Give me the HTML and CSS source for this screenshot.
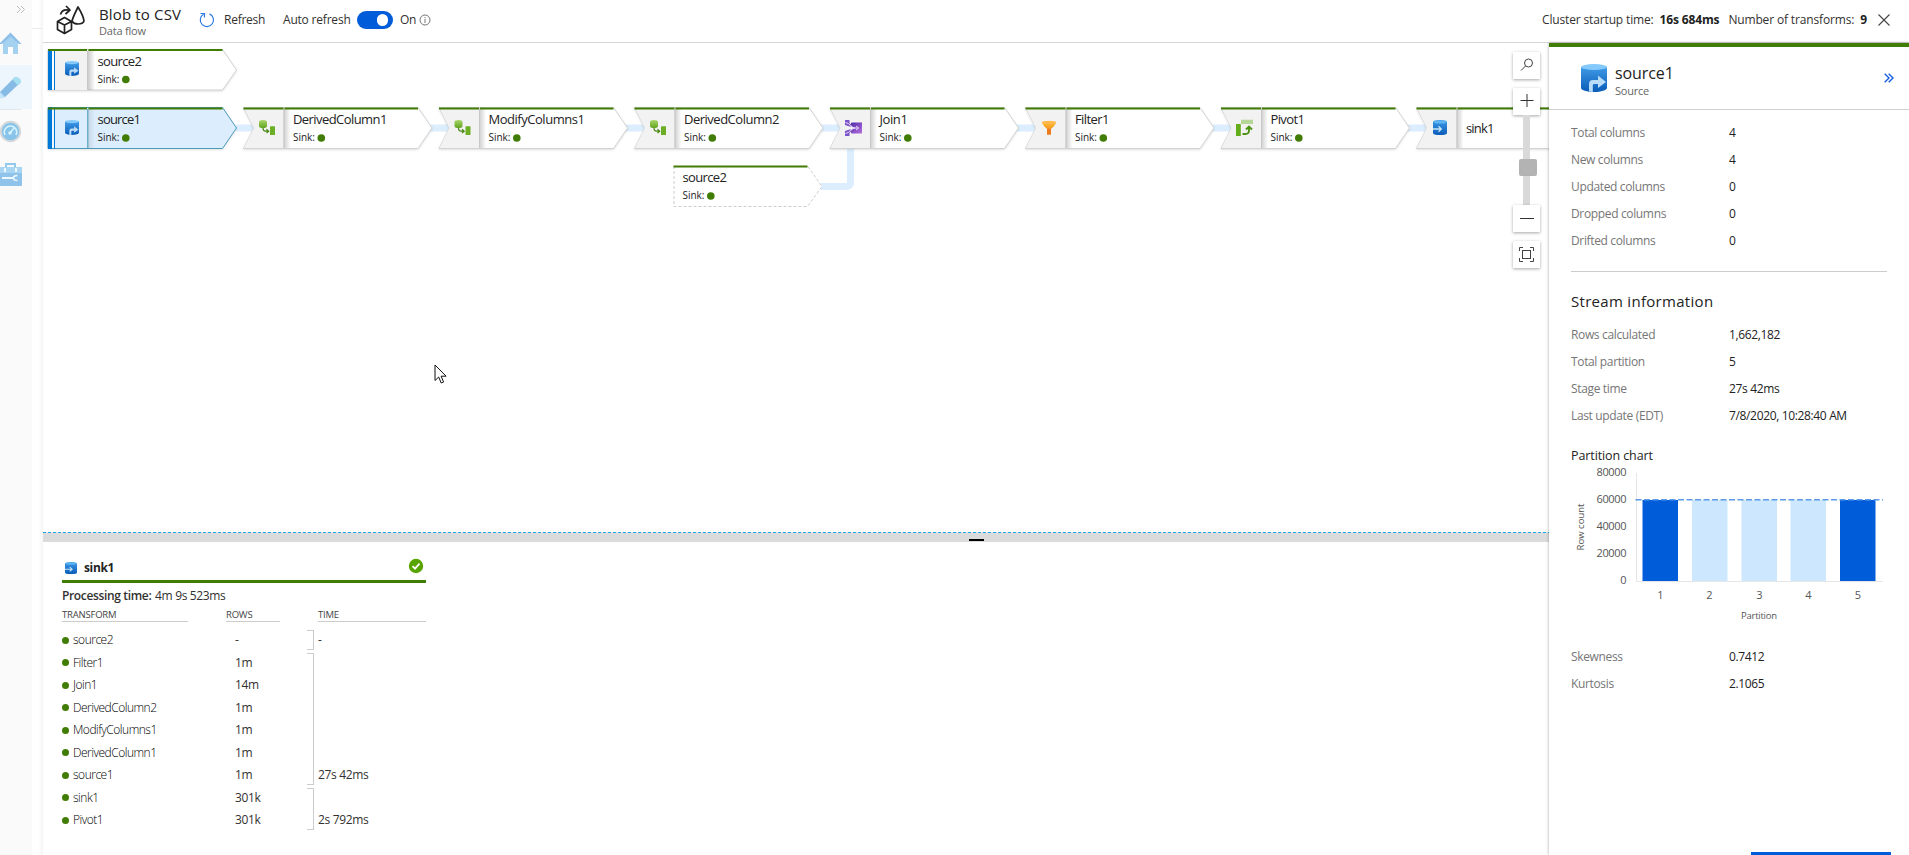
FILE: index.html
```
<!DOCTYPE html>
<html lang="en">
<head>
    <meta charset="UTF-8">
    <title>Blob to CSV | Data flow</title>
    <meta name="viewport" content="width=device-width, initial-scale=1">
    <link rel="stylesheet" href="styles.css">
</head>
<body>
    <!-- shared icons -->
    <svg class="defs" width="0" height="0">
        <defs>
            <linearGradient id="gBlue" x1="0" y1="0" x2="0" y2="1">
                <stop offset="0" stop-color="#3f9ae6"/><stop offset="1" stop-color="#0a5cb8"/>
            </linearGradient>
            <linearGradient id="gGreen" x1="0" y1="0" x2="0" y2="1">
                <stop offset="0" stop-color="#a9d66a"/><stop offset="1" stop-color="#62a420"/>
            </linearGradient>
            <linearGradient id="gPurple" x1="0" y1="0" x2="1" y2="1">
                <stop offset="0" stop-color="#4a2aa8"/><stop offset="1" stop-color="#b96fe0"/>
            </linearGradient>
            <linearGradient id="gOrange" x1="0" y1="0" x2="0" y2="1">
                <stop offset="0" stop-color="#fbb62f"/><stop offset="1" stop-color="#f07f1e"/>
            </linearGradient>
            <linearGradient id="gShade" x1="0" y1="0" x2="1" y2="0">
                <stop offset="0" stop-color="#000" stop-opacity=".2"/><stop offset="1" stop-color="#000" stop-opacity="0"/>
            </linearGradient>
            <symbol id="i-source" viewBox="0 0 26 28">
                <path d="M0 3v21c0 2 6 4 13 4s13-2 13-4V3z" fill="url(#gBlue)"/>
                <ellipse cx="13" cy="3" rx="13" ry="3" fill="#83c9fb"/>
                <path d="M8 27.5V20q0-4 4-4h5v-4.500l8 6.500-8 6v-4h-4q-1.200 0-1.200 1.200V28z" fill="#b9dcf8"/>
            </symbol>
            <symbol id="i-sink" viewBox="0 0 14 15">
                <path d="M0 2q0-2 7-2t7 2v11q0 2-7 2t-7-2z" fill="url(#gBlue)"/>
                <path d="M.5 2Q1 .5 7 .5t6.500 1.500Q13 3.500 7 3.500T.5 2z" fill="#5db4f3"/>
                <path d="M0 9h8M5.500 6.300 8.300 9l-2.800 2.700" fill="none" stroke="#c6e3fa" stroke-width="1.300"/>
            </symbol>
            <symbol id="i-derived" viewBox="0 0 17 15">
                <path d="M.5 2Q.5 0 4.500 0t4 2v4q0 2-4 2t-4-2z" fill="url(#gGreen)"/>
                <path d="M4.500 8q0 3.200 2.500 3.200h2.500M8 9.300l2.200 1.900L8 13" fill="none" stroke="#4c8a17" stroke-width="1.200"/>
                <rect x="11.500" y="6.300" width="5" height="8.700" rx=".5" fill="#6cae25"/>
            </symbol>
            <symbol id="i-join" viewBox="0 0 18 17">
                <path d="M.5.500h4.500v3l3 3.500H5L.5 5.500zM.5 16.500h4.500v-3l3-3.500H5L.5 11.500z" fill="#7c53c8"/>
                <path d="M7 3h10.500v11H7l-1-2 3-3.500L6 5z" fill="url(#gPurple)"/>
                <path d="M1 3q3 .5 5 3t5 2.500h3M1 14q3-.5 5-3t5-2.500M11.500 6.500l2.500 2-2.500 2" fill="none" stroke="#e8dcfa" stroke-width="1"/>
            </symbol>
            <symbol id="i-filter" viewBox="0 0 15 15">
                <path d="M.5 2.500Q3 7 5.500 8.300V14h4V8.300Q12 7 14.500 2.500z" fill="url(#gOrange)"/>
                <ellipse cx="7.500" cy="2" rx="7.200" ry="1.700" fill="#fdb94b"/>
                <path d="M5.500 8.300h4V14h-4z" fill="#ee7a1e"/>
            </symbol>
            <symbol id="i-pivot" viewBox="0 0 17 17">
                <rect x="5" y="0" width="12" height="4.500" fill="#b5d698"/>
                <rect x="0" y="4.500" width="4.800" height="12" fill="#63ad1a"/>
                <path d="M6.500 14.500h3q3.500 0 3.500-3.500V8M10 10l3-3 3 3" fill="none" stroke="#4f9312" stroke-width="1.900"/>
            </symbol>
            <!-- transformation step with a notched left edge -->
            <g id="step">
                <path class="step-box" d="M0 .500 10.500 21 0 41.500H174.500L188.500 21 174.500.500z"/>
                <path class="step-icon-bg" d="M.5 1 10.500 21 .5 41H40V1z"/>
                <rect x="40" y="1" width="7" height="40" fill="url(#gShade)"/>
                <path class="step-divider" d="M40.500 2v39"/>
                <path class="step-top" d="M0 1.500H40M41 1.500H174.500"/>
            </g>
        </defs>
    </svg>

    <nav class="sidebar">
        <svg width="43" height="200" viewBox="0 0 43 200">
            <path d="M17 6l3.500 3.500L17 13M21 6l3.500 3.500L21 13" fill="none" stroke="#bbb" stroke-width="1"/>
            <path d="M32 28.500h11" stroke="#ececec"/>
            <g>
                <path d="M3 41v13h15V41l-7.500-8z" fill="#a5d2f0"/>
                <path d="M10.500 32.500-1 44h3l8.500-7.500L19 44h2.500z" fill="#8dbfe8"/>
                <rect x="8" y="47" width="5" height="7" fill="#fff"/>
            </g>
            <rect class="nav-active" x="0" y="65" width="32" height="44"/>
            <path d="M0 92 15 77l5.500 5.500L5 97l-8 2z" fill="#86bbe6"/>
            <path d="m12.500 79.500 2.500-2.500q2-1 4.500 1.500t1 4.500l-2.500 2.500z" fill="#a6dff2"/>
            <path d="m0 92 5 5-7 2z" fill="#c4e4f7"/>
            <path d="M0 109.500h21" stroke="#e2e6ea"/>
            <circle cx="10.500" cy="131.500" r="9.700" fill="#88c4ea" stroke="#d4d8da" stroke-width="2"/>
            <path d="M5 135a6.200 6.200 0 1 1 11 0M10 133l4-5" fill="none" stroke="#d5f2fb" stroke-width="1.600"/>
            <circle cx="10" cy="133" r="1.800" fill="#d5f2fb"/>
            <path d="M6 167v-3h9v3" fill="none" stroke="#92c9ec" stroke-width="2"/>
            <rect x="-2" y="167" width="24" height="19" rx="1" fill="#90c3ea"/>
            <rect x="-2" y="167" width="24" height="6" fill="#a8d6f2"/>
            <path d="M2 178h12M5 168v4M16 168v4" stroke="#ecf8fd" stroke-width="2"/>
            <path d="M17.500 175.500q-4 0-4 2.500t4 2.500" fill="none" stroke="#ecf8fd" stroke-width="1.500"/>
        </svg>
    </nav>

    <div class="monitor">
        <header class="topbar">
            <svg class="flow-icon" width="30" height="30" viewBox="0 0 30 30" fill="none" stroke="#222" stroke-width="1.700" stroke-linejoin="round">
                <path d="M1.500 16.500 8.500 12.500l7 4v8l-7 4-7-4zM1.500 16.500l7 3.500 7-3.500M8.500 20v8.500"/>
                <path d="M16 16Q17 12 22 2q5.500 9 6 14-1 3-6 3-4.500 0-6-3z"/>
                <path d="M4.500 9.500Q6 4 12.500 5M10 1l4 4-4.500 4"/>
            </svg>
            <div class="title">
                <h1>Blob to CSV</h1>
                <span>Data flow</span>
            </div>
            <button class="refresh" type="button">
                <svg width="16" height="16" viewBox="0 0 16 16" fill="none" stroke="#2d7be0" stroke-width="1.200">
                    <path d="M10.500 1.900A6.600 6.600 0 1 1 4.500 2.300M1.500 1.500h4v4"/>
                </svg>
                <span>Refresh</span>
            </button>
            <label class="auto">Auto refresh</label>
            <span class="toggle"></span>
            <span class="on">On</span>
            <svg class="info" width="12" height="12" viewBox="0 0 12 12" fill="none" stroke="#777">
                <circle cx="6" cy="6" r="5"/><path d="M6 5v4M6 3v1.200"/>
            </svg>
            <div class="stats">
                <span class="cluster">Cluster startup time:</span>
                <b class="cluster-time">16s 684ms</b>
                <span class="transforms">Number of transforms:</span>
                <b>9</b>
                <svg width="12" height="12" viewBox="0 0 12 12" stroke="#444" stroke-width="1.100"><path d="M.5.500l11 11M11.500.500l-11 11"/></svg>
            </div>
        </header>

        <div class="content">
            <main>
                <section class="canvas">
                    <svg class="graph" width="1506" height="489" viewBox="43 43 1506 489">
                        <!-- links -->
                        <path class="link" d="M236 128H1430"/>
                        <path class="link" d="M821 186.500H846q4.500 0 4.500-4.500V146"/>

                        <g transform="translate(48 49)">
                            <path class="step-box" d="M0 .500H174.500L188.500 21 174.500 41H0z"/>
                            <rect x="7" y="2" width="33" height="39" fill="#f2f2f2"/>
                            <rect x="40" y="1" width="7" height="40" fill="url(#gShade)"/>
                            <path class="step-divider" d="M39.500 2v39"/>
                            <path d="M1.800 0v41M6.500 1v40" stroke="#0078d7"/>
                            <rect x="0" y="0" width="4" height="41" fill="#0078d7"/>
                            <path class="step-top" d="M0 1H39M40.500 1H174.500"/>
                            <use href="#i-source" x="17" y="12" width="14" height="15"/>
                            <text class="name" x="49.500" y="17" textLength="44">source2</text>
                            <text class="sink" x="49.500" y="34" textLength="21.500">Sink:</text>
                            <circle class="ok" cx="77.800" cy="30.500" r="3.800"/>
                        </g>

                        <g transform="translate(48 107)">
                            <path class="step-box selected" d="M0 .500H174.500L188.500 21 174.500 41.500H0z"/>
                            <rect x="40" y="1" width="7" height="40" fill="url(#gShade)" opacity=".5"/>
                            <path d="M39.800 2v39" stroke="#3f95b4"/>
                            <path d="M5 2v39" stroke="#fff"/>
                            <path d="M6.500 1v41" stroke="#0078d7"/>
                            <rect x="0" y="0" width="4" height="42" fill="#0078d7"/>
                            <path class="step-top" d="M0 1.500H39M40.500 1.500H174.500"/>
                            <use href="#i-source" x="17" y="13" width="14" height="15"/>
                            <text class="name" x="49.500" y="17" textLength="43">source1</text>
                            <text class="sink" x="49.500" y="34" textLength="21.500">Sink:</text>
                            <circle class="ok" cx="77.800" cy="31" r="3.800"/>
                        </g>

                        <g transform="translate(243.500 107)">
                            <use href="#step"/>
                            <use href="#i-derived" x="15" y="13" width="17" height="15"/>
                            <text class="name" x="49.500" y="17" textLength="94">DerivedColumn1</text>
                            <text class="sink" x="49.500" y="34" textLength="21.500">Sink:</text>
                            <circle class="ok" cx="77.800" cy="31" r="3.800"/>
                        </g>

                        <g transform="translate(439 107)">
                            <use href="#step"/>
                            <use href="#i-derived" x="15" y="13" width="17" height="15"/>
                            <text class="name" x="49.500" y="17" textLength="96">ModifyColumns1</text>
                            <text class="sink" x="49.500" y="34" textLength="21.500">Sink:</text>
                            <circle class="ok" cx="77.800" cy="31" r="3.800"/>
                        </g>

                        <g transform="translate(634.500 107)">
                            <use href="#step"/>
                            <use href="#i-derived" x="15" y="13" width="17" height="15"/>
                            <text class="name" x="49.500" y="17" textLength="95">DerivedColumn2</text>
                            <text class="sink" x="49.500" y="34" textLength="21.500">Sink:</text>
                            <circle class="ok" cx="77.800" cy="31" r="3.800"/>
                        </g>

                        <g transform="translate(830 107)">
                            <use href="#step"/>
                            <use href="#i-join" x="14.500" y="12.500" width="18" height="17"/>
                            <text class="name" x="49.500" y="17" textLength="28">Join1</text>
                            <text class="sink" x="49.500" y="34" textLength="21.500">Sink:</text>
                            <circle class="ok" cx="77.800" cy="31" r="3.800"/>
                        </g>

                        <g transform="translate(1025.500 107)">
                            <use href="#step"/>
                            <use href="#i-filter" x="16" y="13.500" width="15" height="15"/>
                            <text class="name" x="49.500" y="17" textLength="34">Filter1</text>
                            <text class="sink" x="49.500" y="34" textLength="21.500">Sink:</text>
                            <circle class="ok" cx="77.800" cy="31" r="3.800"/>
                        </g>

                        <g transform="translate(1221 107)">
                            <use href="#step"/>
                            <use href="#i-pivot" x="15" y="12.500" width="17" height="17"/>
                            <text class="name" x="49.500" y="17" textLength="34">Pivot1</text>
                            <text class="sink" x="49.500" y="34" textLength="21.500">Sink:</text>
                            <circle class="ok" cx="77.800" cy="31" r="3.800"/>
                        </g>

                        <g transform="translate(1416.500 107)">
                            <use href="#step"/>
                            <use href="#i-sink" x="16.500" y="13" width="14" height="15"/>
                            <text class="name" x="49.500" y="26" textLength="28">sink1</text>
                        </g>

                        <!-- reference to source2 for the join -->
                        <g transform="translate(673.500 165)">
                            <path class="step-ref" d="M.5 1V41.500H134L148.500 21.500 134 1"/>
                            <path class="step-top" d="M0 1.500H134"/>
                            <text class="name" x="9" y="17" textLength="44">source2</text>
                            <text class="sink" x="9" y="34" textLength="21.500">Sink:</text>
                            <circle class="ok" cx="37.300" cy="31" r="3.800"/>
                        </g>
                    </svg>

                    <div class="zoom">
                        <button type="button"><svg width="14" height="14" viewBox="0 0 14 14" fill="none" stroke="#444"><circle cx="8.500" cy="5" r="4"/><path d="M5.500 8 1 12.500"/></svg></button>
                        <button type="button" class="zoom-in"><svg width="14" height="14" viewBox="0 0 14 14" stroke="#333"><path d="M.5 6.500h13M7 0v13"/></svg></button>
                        <div class="track"><span></span></div>
                        <button type="button"><svg width="14" height="14" viewBox="0 0 14 14" stroke="#333"><path d="M0 7.500h14"/></svg></button>
                        <button type="button" class="fit"><svg width="15" height="15" viewBox="0 0 15 15" fill="none" stroke="#444"><path d="M.5 4V.500H4M11 .500h3.500V4M14.500 11v3.500H11M4 14.500H.5V11"/><rect x="3.500" y="3.500" width="8" height="8"/></svg></button>
                    </div>

                    <svg class="cursor" width="14" height="21" viewBox="0 0 14 21">
                        <path d="M1 1v15.500l3.700-3.500 2.500 6 2.400-1-2.500-5.800h5z" fill="#fff" stroke="#111"/>
                    </svg>
                </section>

                <div class="splitter"><span></span></div>

                <section class="details">
                    <div class="sink-head">
                        <svg width="12" height="12" viewBox="0 0 14 15" preserveAspectRatio="none"><use href="#i-sink" width="14" height="15"/></svg>
                        <b>sink1</b>
                        <svg class="check" width="16" height="16" viewBox="0 0 16 16"><circle cx="8" cy="8" r="7.200" fill="#57a300"/><path d="m4.500 8.200 2.500 2.500 4.500-5" fill="none" stroke="#fff" stroke-width="1.800"/></svg>
                    </div>
                    <p class="processing"><b>Processing time:</b> <span>4m 9s 523ms</span></p>
                    <div class="heads">
                        <span>TRANSFORM</span><span>ROWS</span><span>TIME</span>
                    </div>
                    <div class="stages">
                        <ul class="names">
                            <li>source2</li>
                            <li>Filter1</li>
                            <li>Join1</li>
                            <li>DerivedColumn2</li>
                            <li>ModifyColumns1</li>
                            <li>DerivedColumn1</li>
                            <li>source1</li>
                            <li>sink1</li>
                            <li>Pivot1</li>
                        </ul>
                        <ul class="rows">
                            <li>-</li>
                            <li>1m</li>
                            <li>14m</li>
                            <li>1m</li>
                            <li>1m</li>
                            <li>1m</li>
                            <li>1m</li>
                            <li>301k</li>
                            <li>301k</li>
                        </ul>
                        <div class="times">
                            <div class="span-1"><span>-</span></div>
                            <div class="span-6"><span>27s 42ms</span></div>
                            <div class="span-2"><span>2s 792ms</span></div>
                        </div>
                    </div>
                </section>
            </main>

            <aside class="panel">
                <div class="panel-head">
                    <svg width="26" height="28"><use href="#i-source" width="26" height="28"/></svg>
                    <div>
                        <h2>source1</h2>
                        <span>Source</span>
                    </div>
                    <svg class="collapse" width="10" height="10" viewBox="0 0 10 10" fill="none" stroke="#1560e0" stroke-width="1.400"><path d="M.7.700 5 5 .7 9.300M4.700.700 9 5 4.700 9.300"/></svg>
                </div>
                <div class="panel-body">
                    <dl class="columns">
                        <dt>Total columns</dt><dd>4</dd>
                        <dt>New columns</dt><dd>4</dd>
                        <dt>Updated columns</dt><dd>0</dd>
                        <dt>Dropped columns</dt><dd>0</dd>
                        <dt>Drifted columns</dt><dd>0</dd>
                    </dl>
                    <h3>Stream information</h3>
                    <dl>
                        <dt>Rows calculated</dt><dd>1,662,182</dd>
                        <dt>Total partition</dt><dd>5</dd>
                        <dt>Stage time</dt><dd>27s 42ms</dd>
                        <dt>Last update (EDT)</dt><dd>7/8/2020, 10:28:40 AM</dd>
                    </dl>
                    <h4>Partition chart</h4>
                    <svg class="chart" width="315" height="166" viewBox="1572 461 315 166">
                        <path d="M1636.500 474V582.500H1883" fill="none" stroke="#e6e6e6"/>
                        <g class="bars">
                            <rect class="dark" x="1642.500" y="501" width="35.500" height="81"/>
                            <rect x="1692" y="501" width="35.500" height="81"/>
                            <rect x="1741.500" y="501" width="35.500" height="81"/>
                            <rect x="1790.500" y="501" width="35.500" height="81"/>
                            <rect class="dark" x="1840" y="501" width="35.500" height="81"/>
                        </g>
                        <path d="M1635.500 500.800H1883" stroke="#5c9aea" stroke-width="1.600" stroke-dasharray="6 2.500"/>
                        <g class="y-labels">
                            <text x="1626.500" y="477" textLength="30">80000</text>
                            <text x="1626.500" y="504" textLength="30">60000</text>
                            <text x="1626.500" y="531" textLength="30">40000</text>
                            <text x="1626.500" y="558" textLength="30">20000</text>
                            <text x="1626.500" y="585">0</text>
                        </g>
                        <g class="x-labels">
                            <text x="1660.500" y="600">1</text>
                            <text x="1709.500" y="600">2</text>
                            <text x="1759.500" y="600">3</text>
                            <text x="1808.500" y="600">4</text>
                            <text x="1858" y="600">5</text>
                        </g>
                        <text class="axis-title" x="1759" y="620" textLength="36">Partition</text>
                        <text class="axis-title" transform="translate(1584 528) rotate(-90)" textLength="47">Row count</text>
                    </svg>
                    <dl class="moments">
                        <dt>Skewness</dt><dd>0.7412</dd>
                        <dt>Kurtosis</dt><dd>2.1065</dd>
                    </dl>
                </div>
                <div class="panel-foot"></div>
            </aside>
        </div>
    </div>
</body>
</html>
```
FILE: styles.css
```
* {
    box-sizing: border-box;
}
html {
    height: 100%;
    overflow: hidden;
}
body {
    margin: 0;
    height: 100%;
    display: flex;
    overflow: hidden;
    background: #fff;
    color: #323130;
    font-family: 'Open Sans', 'Noto Sans', sans-serif;
    font-size: 12px;
    letter-spacing: -0.35px;
}
h1, h2, h3, h4, p, ul, dl, dd {
    margin: 0;
    padding: 0;
    font-weight: 400;
}
ul {
    list-style: none;
}
button {
    border: none;
    background: none;
    padding: 0;
    font: inherit;
    letter-spacing: inherit;
    color: inherit;
}
svg {
    display: block;
    flex: none;
}
.defs {
    position: absolute;
}

/* left navigation */
.sidebar {
    width: 43px;
    flex: none;
    background: linear-gradient(90deg, #fafafa 0, #fafafa 32px, #fff 32px, #fff 38px, #f4f4f4 43px);
}
.nav-active {
    fill: #edf5fd;
}

.monitor {
    flex: 1;
    min-width: 0;
    display: flex;
    flex-direction: column;
}

/* top bar */
.topbar {
    height: 43px;
    flex: none;
    display: flex;
    align-items: center;
    padding: 0 19px 3px 13px;
    border-bottom: 1px solid #d6d6d6;
}
.flow-icon {
    margin-right: 13px;
}
.title {
    width: 100px;
}
.title h1 {
    font-size: 15px;
    line-height: 20px;
    letter-spacing: 0.15px;
    margin-top: 2px;
    color: #222;
}
.title span {
    display: block;
    font-size: 11px;
    line-height: 14px;
    letter-spacing: -0.2px;
    color: #666;
}
.refresh {
    display: flex;
    align-items: center;
    width: 84px;
    gap: 9px;
    letter-spacing: -0.25px;
}
.auto {
    width: 74px;
    letter-spacing: -0.2px;
}
.toggle {
    width: 36px;
    height: 18px;
    border-radius: 9px;
    background: #015cda;
    padding: 3px 5px;
    display: flex;
    justify-content: flex-end;
}
.toggle::after {
    content: "";
    width: 11px;
    height: 12px;
    border-radius: 6px;
    background: #fff;
}
.on {
    margin: 0 3px 0 7px;
}
.stats {
    margin-left: auto;
    display: flex;
    align-items: center;
    gap: 6px;
    letter-spacing: -0.15px;
}
.stats b {
    color: #222;
}
.cluster-time {
    margin-right: 3px;
}
.stats svg {
    margin-left: 5px;
}

.content {
    flex: 1;
    min-height: 0;
    display: flex;
}
main {
    width: 1506px;
    flex: none;
    display: flex;
    flex-direction: column;
}

/* graph */
.canvas {
    position: relative;
    height: 489px;
    flex: none;
}
.link {
    fill: none;
    stroke: #dceefd;
    stroke-width: 7;
}
.step-box {
    fill: #fff;
    stroke: #d2d2d2;
    filter: drop-shadow(0 1px 1px rgba(0, 0, 0, 0.12));
}
.step-box.selected {
    fill: #dceefd;
    stroke: #4a9ab8;
}
.step-icon-bg {
    fill: #f2f2f2;
}
.step-divider {
    stroke: #c8c8c8;
}
.step-top {
    stroke: #417c05;
    stroke-width: 2.2;
}
.step-ref {
    fill: #fff;
    stroke: #ccc;
    stroke-dasharray: 3 2;
}
.name {
    font-size: 13px;
    fill: #222;
}
.sink {
    font-size: 10px;
    fill: #222;
}
.ok {
    fill: #417c05;
}
.zoom {
    position: absolute;
    right: 9px;
    top: 9px;
    display: flex;
    flex-direction: column;
    align-items: center;
}
.zoom button {
    width: 27px;
    height: 27px;
    background: #fff;
    box-shadow: 0 1px 3px rgba(0, 0, 0, 0.35);
    display: flex;
    align-items: center;
    justify-content: center;
    padding-bottom: 1px;
}
.zoom .zoom-in, .zoom .fit {
    margin-top: 9px;
}
.track {
    width: 7px;
    height: 90px;
    padding-top: 44px;
    background: #d9d9d9;
}
.track span {
    display: block;
    width: 18px;
    height: 17px;
    margin-left: -4px;
    border-radius: 2px;
    background: #b3b3b3;
}
.cursor {
    position: absolute;
    left: 391px;
    top: 321px;
}

.splitter {
    height: 10px;
    flex: none;
    background: repeating-linear-gradient(90deg, #1aa7e8 0, #1aa7e8 3px, #e4e4e4 3px, #e4e4e4 5px) 0 0 / 100% 1px no-repeat, #dbdbdb;
    padding: 7px 0 0 926px;
}
.splitter span {
    display: block;
    width: 15px;
    height: 2px;
    background: #000;
}

/* sink details */
.details {
    width: 383px;
    padding: 17px 0 0 19px;
}
.sink-head {
    height: 24px;
    display: flex;
    align-items: center;
    padding: 0 2px 4px 3px;
    border-bottom: 3px solid #417c05;
}
.sink-head b {
    margin-left: 7px;
    color: #222;
}
.sink-head .check {
    margin: -3px 0 0 auto;
}
.processing {
    line-height: 18px;
    margin-top: 4px;
}
.processing b {
    font-weight: 600;
    margin-right: 1px;
}
.heads {
    display: grid;
    grid-template-columns: 126px 54px 108px;
    justify-content: space-between;
    margin-top: 3px;
    font-size: 9.5px;
    line-height: 13px;
    letter-spacing: -0.2px;
    color: #444;
}
.heads span {
    border-bottom: 1px solid #ccc;
}
.stages {
    display: grid;
    grid-template-columns: 173px 73px 1fr;
    margin-top: 7px;
    line-height: 22.5px;
}
.stages li {
    height: 22.5px;
}
.names li {
    display: flex;
    align-items: center;
    font-weight: 300;
    letter-spacing: -0.5px;
    color: #000;
}
.names li::before {
    content: "";
    width: 7px;
    height: 7px;
    border-radius: 50%;
    background: #417c05;
    margin-right: 4px;
}
.times {
    margin-left: -1px;
}
.times > div {
    position: relative;
    display: flex;
    align-items: flex-end;
    padding-left: 11px;
}
.times > div::before {
    content: "";
    position: absolute;
    left: 0;
    top: 1px;
    bottom: 2px;
    width: 6px;
    border: 1px solid #ccc;
    border-left: none;
}
.span-1 {
    height: 22.5px;
}
.span-6 {
    height: 135px;
}
.span-2 {
    height: 45px;
}

/* right panel */
.panel {
    flex: 1;
    display: flex;
    flex-direction: column;
    background: #fff;
    border-top: 4px solid #417c05;
    box-shadow: 0 0 3px rgba(0, 0, 0, 0.35);
    position: relative;
}
.panel-head {
    height: 63px;
    flex: none;
    display: flex;
    align-items: center;
    padding: 0 15px 0 32px;
    border-bottom: 1px solid #d0d0d0;
}
.panel-head h2 {
    font-size: 16px;
    line-height: 20px;
    letter-spacing: -0.1px;
    color: #222;
}
.panel-head div {
    margin: 4px 0 0 8px;
}
.panel-head span {
    display: block;
    font-size: 11px;
    line-height: 15px;
    letter-spacing: -0.25px;
    color: #666;
}
.collapse {
    margin-left: auto;
}
.panel-body {
    flex: 1;
    padding: 9px 22px 0 22px;
}
dl {
    display: grid;
    grid-template-columns: 158px 1fr;
    line-height: 27px;
}
dt {
    color: #767676;
}
dd {
    color: #222;
}
.columns {
    padding-bottom: 17px;
    border-bottom: 1px solid #ccc;
}
.panel-body h3 {
    font-size: 15px;
    line-height: 20px;
    letter-spacing: 0.3px;
    margin: 19px 0 10px;
    color: #222;
}
.panel-body h4 {
    font-size: 12.5px;
    line-height: 18px;
    letter-spacing: -0.1px;
    margin: 18px 0 -5px;
    color: #222;
}
.bars rect {
    fill: #cce7fe;
}
.bars .dark {
    fill: #015cda;
}
.chart {
    margin-left: 1px;
}
.chart text {
    font-size: 11px;
    fill: #555;
    letter-spacing: 0;
    text-anchor: middle;
}
.chart .y-labels text {
    text-anchor: end;
}
.chart .axis-title {
    font-size: 9.5px;
}
.moments {
    margin-top: 17px;
}
.panel-foot {
    width: 140px;
    height: 3px;
    margin-left: 202px;
    background: #015cda;
}
```
